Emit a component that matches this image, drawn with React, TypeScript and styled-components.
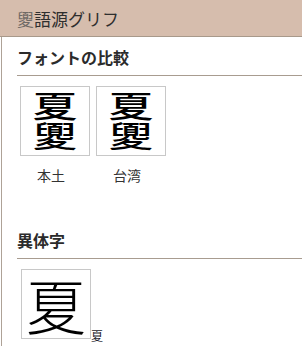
import styled, { createGlobalStyle } from "styled-components";

const Global = createGlobalStyle`
  html, body {
    margin: 0;
    padding: 0;
    background: #ffffff;
  }
  body {
    font-family: "Noto Sans CJK JP", "Noto Sans", sans-serif;
    color: #222;
    overflow: hidden;
  }
`;

const Panel = styled.div`
  width: 302px;
  height: 346px;
  display: flex;
  flex-direction: column;
`;

const Header = styled.div`
  height: 36px;
  flex: none;
  display: flex;
  align-items: center;
  padding-left: 17px;
  background: #d6bdad;
  border-bottom: 1px solid #a8998b;
  font-size: 17px;
  color: #2e2e2e;
`;

const HeaderIcon = styled.span`
  color: #6f6a66;
`;

const Body = styled.div`
  flex: 1;
  margin-left: 1px;
  border-left: 1px solid #aea297;
  padding-left: 15px;
`;

const SectionTitle = styled.div<{ $top: number }>`
  margin-top: ${(p) => p.$top}px;
  padding-bottom: 8px;
  border-bottom: 1px solid #a89c90;
  font-size: 16px;
  line-height: 20px;
  font-weight: 700;
  color: #2b2b2b;
`;

const GlyphRow = styled.div`
  display: flex;
  gap: 6px;
  margin: 10px 0 0 3px;
`;

const GlyphCell = styled.div`
  display: flex;
  flex-direction: column;
`;

const GlyphBox = styled.div`
  width: 68px;
  height: 68px;
  border: 1px solid #c8c8c8;
  display: flex;
  align-items: center;
  justify-content: center;
`;

/* the glyph image: two characters stacked, drawn wide */
const StackedGlyph = styled.span`
  writing-mode: vertical-rl;
  font-size: 30px;
  line-height: 1;
  font-weight: 500;
  color: #000;
  transform: scaleX(1.5);
`;

const Label = styled.div`
  margin-top: 9px;
  padding-left: 17px;
  font-size: 14px;
  line-height: 20px;
  color: #333;
`;

const VariantRow = styled.div`
  display: flex;
  align-items: flex-end;
  margin: 10px 0 0 4px;
`;

const BigBox = styled.div`
  width: 68px;
  height: 68px;
  border: 1px solid #c8c8c8;
  display: flex;
  align-items: center;
  justify-content: center;
  font-size: 60px;
  line-height: 1;
  font-weight: 300;
  color: #000;
`;

const SmallChar = styled.span`
  font-size: 12px;
  line-height: 12px;
  margin-bottom: -3px;
  color: #1a1a2a;
`;

const fonts = ["本土", "台湾"];

export default function App() {
  return (
    <>
      <Global />
      <Panel>
        <Header>
          <HeaderIcon>夓</HeaderIcon>語源グリフ
        </Header>
        <Body>
          <SectionTitle $top={10}>フォントの比較</SectionTitle>
          <GlyphRow>
            {fonts.map((f) => (
              <GlyphCell key={f}>
                <GlyphBox>
                  <StackedGlyph>夏夓</StackedGlyph>
                </GlyphBox>
                <Label>{f}</Label>
              </GlyphCell>
            ))}
          </GlyphRow>
          <SectionTitle $top={45}>異体字</SectionTitle>
          <VariantRow>
            <BigBox>夏</BigBox>
            <SmallChar>夏</SmallChar>
          </VariantRow>
        </Body>
      </Panel>
    </>
  );
}
